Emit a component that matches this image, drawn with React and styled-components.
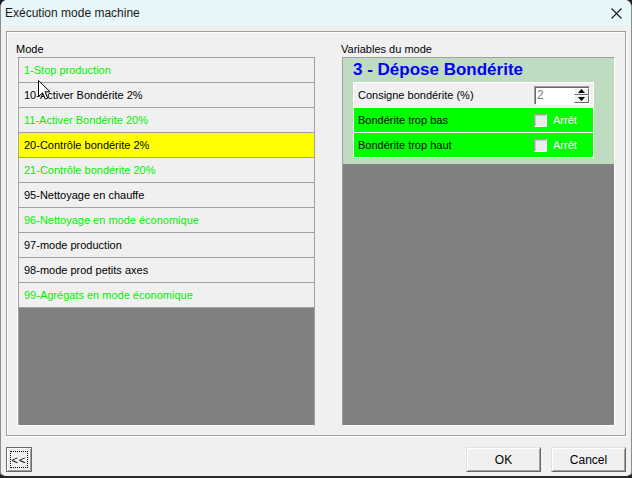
import React from 'react';
import styled, { createGlobalStyle } from 'styled-components';

const GlobalStyle = createGlobalStyle`
  * { box-sizing: border-box; }
  html, body {
    margin: 0;
    padding: 0;
    background: #1f1f1f;
  }
`;

const Window = styled.div`
  position: relative;
  width: 632px;
  height: 478px;
  display: flex;
  flex-direction: column;
  background: #f0f0f0;
  border-left: 1px solid #8c8c8c;
  border-right: 1px solid #8c8c8c;
  border-bottom: 2px solid #2a2a2a;
  border-radius: 7px 7px 6px 6px;
  overflow: hidden;
  font-family: "Liberation Sans", Arial, sans-serif;
  font-size: 11px;
  color: #000;
`;

const TitleBar = styled.div`
  height: 26px;
  flex-shrink: 0;
  display: flex;
  align-items: center;
  justify-content: space-between;
  padding: 0 9px 0 4px;
  background: #e7f6f8;
  font-family: "Liberation Sans", Arial, sans-serif;
  font-size: 12px;
  color: #1a1a1a;
`;

const CloseIcon = styled.svg`
  width: 11px;
  height: 11px;
  display: block;
`;

const Body = styled.div`
  padding: 5px 5px 0 5px;
  display: flex;
  flex-direction: column;
`;

const GroupBox = styled.div`
  height: 405px;
  display: grid;
  grid-template-columns: 298px 273px;
  column-gap: 27px;
  padding: 10px 10px 9px 10px;
  border: 1px solid #a0a0a0;
  box-shadow: 1px 1px 0 #ffffff, inset 1px 1px 0 #ffffff;
`;

const Column = styled.div`
  display: flex;
  flex-direction: column;
  min-height: 0;
`;

const Caption = styled.div`
  height: 14px;
  line-height: 14px;
  margin: 0 0 1px -1px;
`;

const ListBox = styled.div`
  flex: 1;
  display: flex;
  flex-direction: column;
  background: #808080;
  border: 1px solid #a0a0a0;
  border-bottom-color: #ffffff;
  border-left-color: #ffffff;
  box-shadow: inset 1px 0 0 #a0a0a0;
`;

const ListRow = styled.div`
  height: 25px;
  flex-shrink: 0;
  display: flex;
  align-items: center;
  padding-left: 5px;
  background: ${p => (p.$selected ? '#ffff00' : '#f0f0f0')};
  color: ${p => (p.$active ? '#00f000' : '#000')};
  border-bottom: 1px solid #a0a0a0;
  border-left: 1px solid #a0a0a0;
`;

const ModePanel = styled.div`
  flex: 1;
  display: flex;
  flex-direction: column;
  background: #808080;
  border: 1px solid #a0a0a0;
  border-bottom-color: #ffffff;
  border-right-color: #ffffff;
`;

const ModeHeader = styled.div`
  background: #c0dcc0;
  padding: 0 0 6px 10px;
`;

const ModeTitle = styled.div`
  height: 24px;
  line-height: 24px;
  font-family: "Liberation Sans", Arial, sans-serif;
  font-weight: bold;
  font-size: 17px;
  color: #0000ff;
`;

const VarTable = styled.div`
  width: 241px;
  display: flex;
  flex-direction: column;
  gap: 1px;
  background: #ffffff;
  border: 1px solid #ffffff;
`;

const VarRow = styled.div`
  height: 24px;
  display: flex;
  align-items: center;
  justify-content: space-between;
  padding: 0 3px 0 4px;
  background: ${p => (p.$alarm ? '#00ff00' : '#f0f0f0')};
`;

const SpinBox = styled.div`
  width: 56px;
  height: 19px;
  display: flex;
  align-items: stretch;
  background: #ffffff;
  border: 1px solid;
  border-color: #a0a0a0 #ffffff #ffffff #a0a0a0;
  box-shadow: inset 1px 1px 0 #696969;
`;

const SpinValue = styled.div`
  flex: 1;
  padding: 1px 0 0 2px;
  color: #808080;
  font-size: 12px;
  line-height: 15px;
`;

const SpinButtons = styled.div`
  width: 15px;
  display: flex;
  flex-direction: column;
  margin: 1px 0 1px 0;
`;

const SpinButton = styled.div`
  flex: 1;
  display: flex;
  align-items: center;
  justify-content: center;
  background: #f0f0f0;
  border: 1px solid;
  border-color: #ffffff #696969 #696969 #ffffff;
`;

const CheckCell = styled.div`
  width: 56px;
  display: flex;
  align-items: center;
  gap: 6px;
`;

const CheckBox = styled.div`
  width: 13px;
  height: 13px;
  background: #ececec;
  border: 1px solid;
  border-color: #a0a0a0 #ffffff #ffffff #a0a0a0;
  box-shadow: inset 1px 1px 0 #c8c8c8;
`;

const CheckLabel = styled.span`
  color: #ffffff;
  text-shadow: 0 0 1px rgba(120, 120, 120, 0.5);
`;

const Footer = styled.div`
  margin-top: 11px;
  padding: 0 0 0 0;
  display: flex;
  align-items: center;
  justify-content: space-between;
`;

const ButtonGroup = styled.div`
  display: flex;
  gap: 10px;
`;

const DialogButton = styled.div`
  width: ${p => p.$width || 75}px;
  height: 25px;
  display: flex;
  align-items: center;
  justify-content: center;
  background: #f0f0f0;
  border: 1px solid;
  border-color: ${p => (p.$focused ? '#696969' : '#e3e3e3 #696969 #696969 #e3e3e3')};
  box-shadow: inset 1px 1px 0 #ffffff, inset -1px -1px 0 #a0a0a0;
  font-size: 12px;
  cursor: default;
`;

const FocusRect = styled.div`
  width: 18px;
  height: 17px;
  display: flex;
  align-items: center;
  justify-content: center;
  border: 1px dotted #000;
  font-size: 11px;
  letter-spacing: 1px;
`;

const Pointer = styled.svg`
  position: absolute;
  left: 37px;
  top: 80px;
  width: 13px;
  height: 20px;
`;

const modes = [
  { label: '1-Stop production', active: true },
  { label: '10-Activer Bondérite 2%' },
  { label: '11-Activer Bondérite 20%', active: true },
  { label: '20-Contrôle bondérite 2%', selected: true },
  { label: '21-Contrôle bondérite 20%', active: true },
  { label: '95-Nettoyage en chauffe' },
  { label: '96-Nettoyage en mode économique', active: true },
  { label: '97-mode production' },
  { label: '98-mode prod petits axes' },
  { label: '99-Agrégats en mode économique', active: true },
];

const alarms = ['Bondérite trop bas', 'Bondérite trop haut'];

const Triangle = ({ up }) => (
  <svg width="7" height="4" viewBox="0 0 7 4">
    <polygon points={up ? '0,4 7,4 3.5,0' : '0,0 7,0 3.5,4'} fill="#000" />
  </svg>
);

export default function App() {
  return (
    <>
      <GlobalStyle />
      <Window>
        <TitleBar>
          <span>Exécution mode machine</span>
          <CloseIcon viewBox="0 0 11 11">
            <path d="M0.5 0.5 L10.5 10.5 M10.5 0.5 L0.5 10.5" stroke="#1a1a1a" strokeWidth="1.1" />
          </CloseIcon>
        </TitleBar>

        <Body>
          <GroupBox>
            <Column>
              <Caption>Mode</Caption>
              <ListBox>
                {modes.map(m => (
                  <ListRow key={m.label} $active={m.active} $selected={m.selected}>
                    {m.label}
                  </ListRow>
                ))}
              </ListBox>
            </Column>

            <Column>
              <Caption>Variables du mode</Caption>
              <ModePanel>
                <ModeHeader>
                  <ModeTitle>3 - Dépose Bondérite</ModeTitle>
                  <VarTable>
                    <VarRow>
                      <span>Consigne bondérite (%)</span>
                      <SpinBox>
                        <SpinValue>2</SpinValue>
                        <SpinButtons>
                          <SpinButton><Triangle up /></SpinButton>
                          <SpinButton><Triangle /></SpinButton>
                        </SpinButtons>
                      </SpinBox>
                    </VarRow>
                    {alarms.map(a => (
                      <VarRow key={a} $alarm>
                        <span>{a}</span>
                        <CheckCell>
                          <CheckBox />
                          <CheckLabel>Arrêt</CheckLabel>
                        </CheckCell>
                      </VarRow>
                    ))}
                  </VarTable>
                </ModeHeader>
              </ModePanel>
            </Column>
          </GroupBox>

          <Footer>
            <DialogButton $width={26} $focused>
              <FocusRect>&lt;&lt;</FocusRect>
            </DialogButton>
            <ButtonGroup>
              <DialogButton>OK</DialogButton>
              <DialogButton>Cancel</DialogButton>
            </ButtonGroup>
          </Footer>
        </Body>

        <Pointer viewBox="0 0 13 20">
          <path d="M0.5 0.5 L0.5 16.5 L4.5 12.8 L7.2 19 L9.6 18 L7 11.8 L12 11.8 Z" fill="#ffffff" stroke="#000" strokeWidth="1" strokeLinejoin="round" />
        </Pointer>
      </Window>
    </>
  );
}
